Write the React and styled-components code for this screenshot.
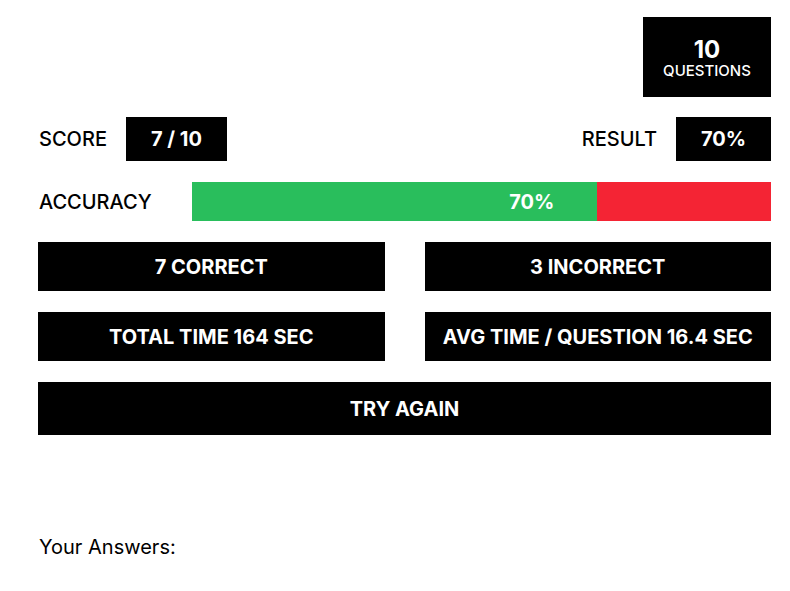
import React from 'react';
import styled, { createGlobalStyle } from 'styled-components';

const GlobalStyle = createGlobalStyle`
    body {
        margin: 0;
        background: #fff;
        font-family: Inter, "Noto Sans", sans-serif;
        color: #000;
    }
`;

const stats = {
    total: 10,
    correct: 7,
    incorrect: 3,
    totalTime: 164,
};

function App() {
    const pct = Math.round((stats.correct / stats.total) * 100);
    return (
        <Page>
            <GlobalStyle />
            <TopBar>
                <CountBox>
                    <CountNumber>{stats.total}</CountNumber>
                    <CountLabel>QUESTIONS</CountLabel>
                </CountBox>
            </TopBar>
            <ScoreRow>
                <Pair>
                    <Label>SCORE</Label>
                    <ValueBox $width="101px">{stats.correct} / {stats.total}</ValueBox>
                </Pair>
                <Pair>
                    <Label>RESULT</Label>
                    <ValueBox $width="95px">{pct}%</ValueBox>
                </Pair>
            </ScoreRow>
            <AccuracyRow>
                <AccuracyLabel>ACCURACY</AccuracyLabel>
                <Bar>
                    <BarFill style={{ width: `${pct}%` }}>{pct}%</BarFill>
                </Bar>
            </AccuracyRow>
            <StatGrid>
                <StatBox>{stats.correct} CORRECT</StatBox>
                <StatBox>{stats.incorrect} INCORRECT</StatBox>
                <StatBox>TOTAL TIME {stats.totalTime} SEC</StatBox>
                <StatBox>AVG TIME / QUESTION {(stats.totalTime / stats.total).toFixed(1)} SEC</StatBox>
            </StatGrid>
            <RetryButton>TRY AGAIN</RetryButton>
            <AnswersTitle>Your Answers:</AnswersTitle>
        </Page>
    );
}

export default App;

const Page = styled.div`
    padding: 17px 19px 40px 38px;
    display: flex;
    flex-direction: column;
    gap: 20px;
`;

const TopBar = styled.div`
    display: flex;
    justify-content: flex-end;
`;

const CountBox = styled.div`
    width: 128px;
    height: 80px;
    background: #000;
    color: #fff;
    display: flex;
    flex-direction: column;
    align-items: center;
    justify-content: center;
    padding-top: 2px;
    box-sizing: border-box;
`;

const CountNumber = styled.div`
    font-size: 24px;
    font-weight: 700;
    line-height: 1.1;
`;

const CountLabel = styled.div`
    font-size: 15px;
    font-weight: 500;
    line-height: 1.1;
`;

const ScoreRow = styled.div`
    display: flex;
    justify-content: space-between;
    align-items: center;
`;

const Pair = styled.div`
    display: flex;
    align-items: center;
    gap: 19px;
`;

const Label = styled.span`
    font-size: 20px;
    font-weight: 500;
    padding-left: 1px;
`;

const ValueBox = styled.div`
    width: ${(p) => p.$width};
    height: 44px;
    background: #000;
    color: #fff;
    font-size: 20px;
    font-weight: 700;
    display: flex;
    align-items: center;
    justify-content: center;
`;

const AccuracyRow = styled.div`
    display: flex;
    align-items: center;
    margin-top: 1px;
`;

const AccuracyLabel = styled.span`
    width: 154px;
    font-size: 20px;
    font-weight: 500;
    padding-left: 1px;
    box-sizing: border-box;
`;

const Bar = styled.div`
    flex: 1;
    height: 39px;
    background: #f42434;
    display: flex;
`;

const BarFill = styled.div`
    background: #29be5c;
    color: #fff;
    font-size: 20px;
    font-weight: 700;
    display: flex;
    align-items: center;
    justify-content: flex-end;
    padding-right: 43px;
    box-sizing: border-box;
`;

const StatGrid = styled.div`
    display: grid;
    grid-template-columns: 1fr 1fr;
    column-gap: 40px;
    row-gap: 21px;
    margin-top: 1px;
`;

const StatBox = styled.div`
    height: 49px;
    background: #000;
    color: #fff;
    font-size: 20px;
    font-weight: 700;
    display: flex;
    align-items: center;
    justify-content: center;
`;

const RetryButton = styled.button`
    height: 53px;
    border: none;
    background: #000;
    color: #fff;
    font-family: inherit;
    font-size: 20px;
    font-weight: 700;
    cursor: pointer;
    margin-top: 1px;
`;

const AnswersTitle = styled.p`
    margin: 80px 0 0 1px;
    font-size: 20px;
    font-weight: 400;
`;
